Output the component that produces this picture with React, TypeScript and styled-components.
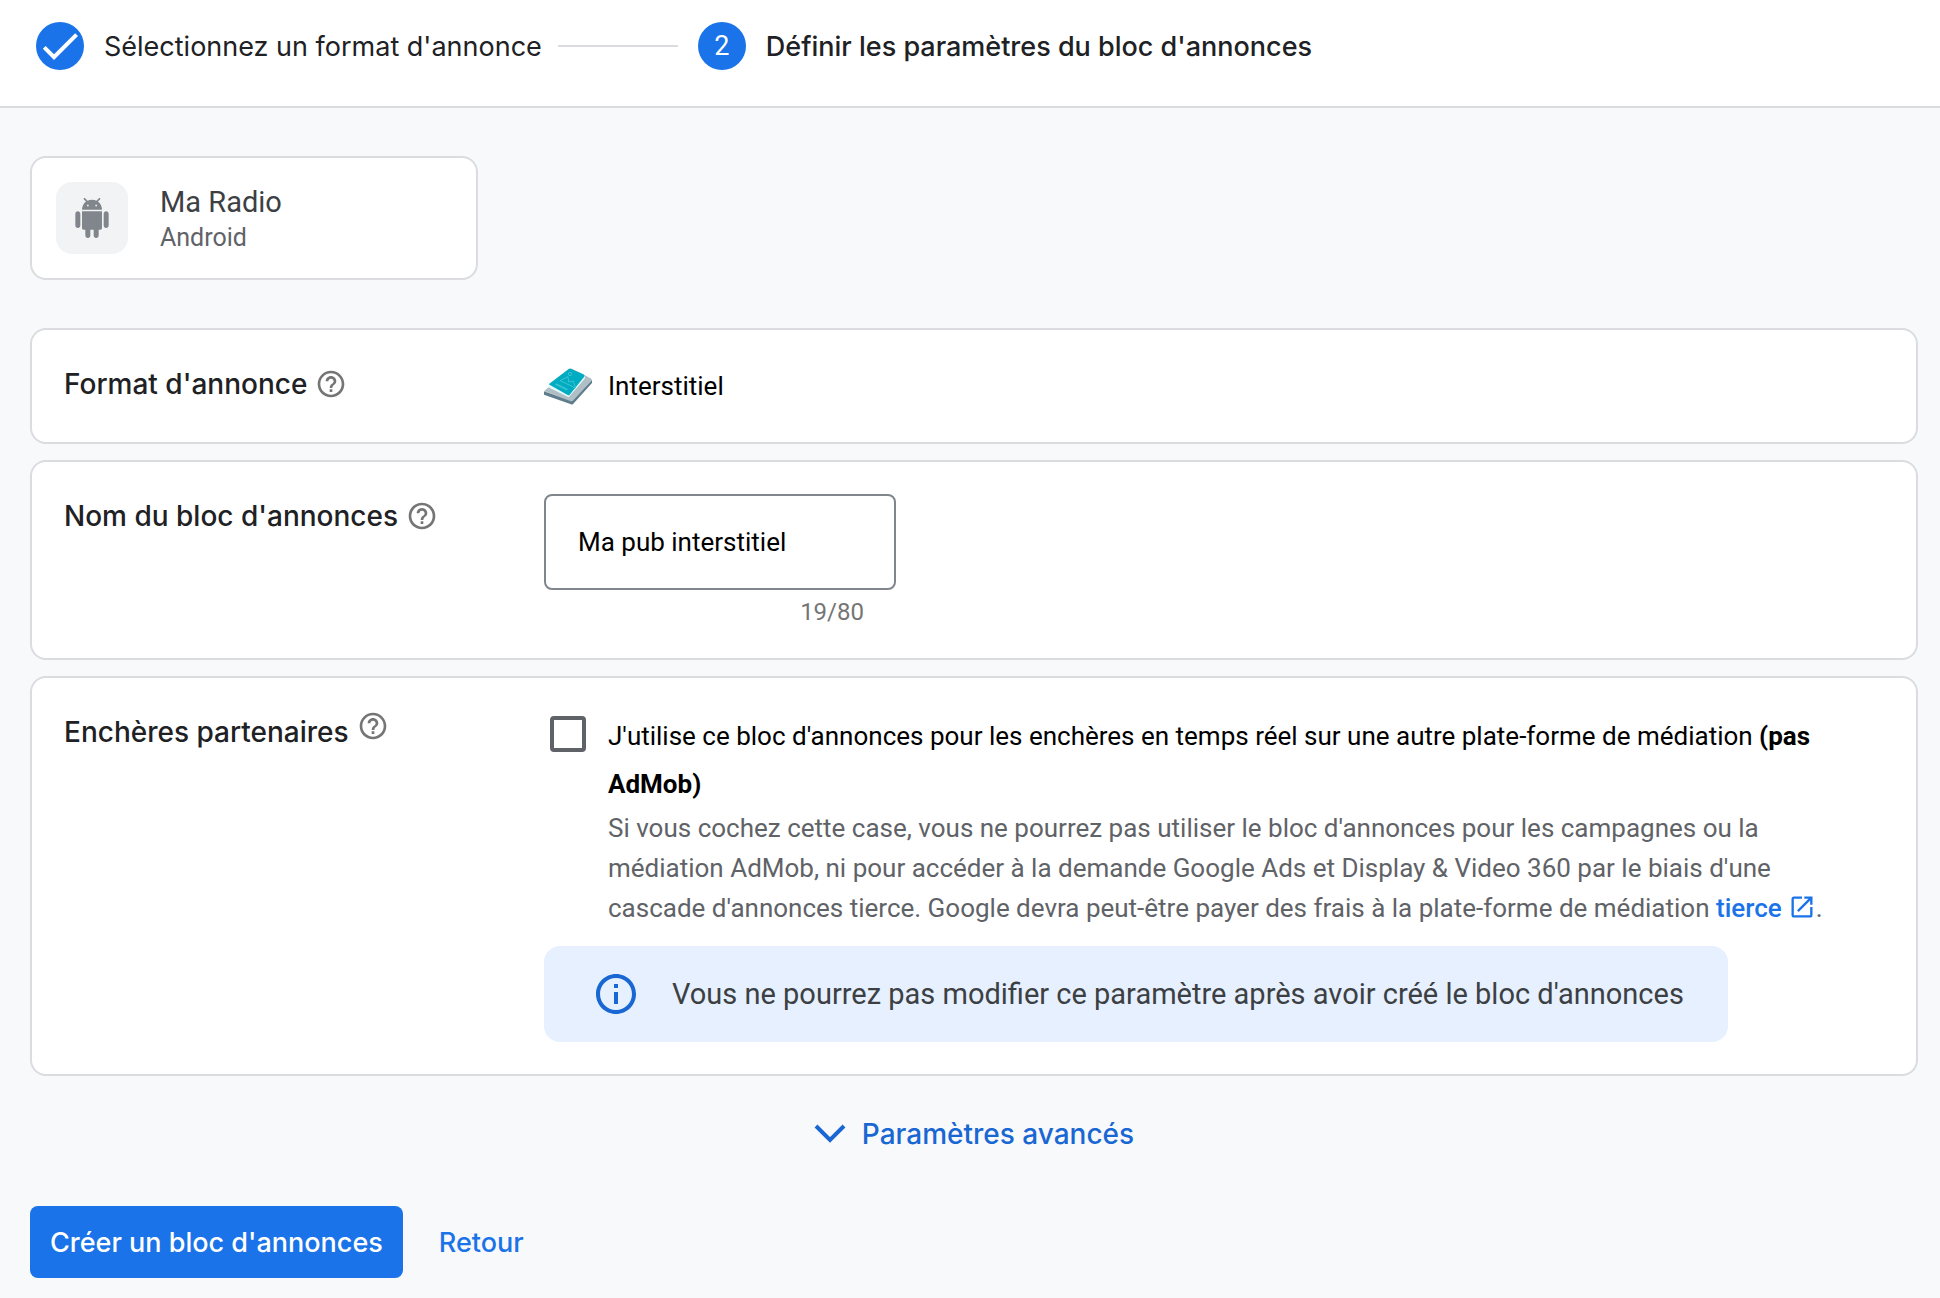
import React, { useId, useState } from "react";
import styled, { createGlobalStyle, css } from "styled-components";

const textFont = css`
  font-family: Roboto, "Liberation Sans", Arial, sans-serif;
`;

const titleFont = css`
  font-family: "Google Sans", "Product Sans", Inter, "Liberation Sans", sans-serif;
`;

const GlobalStyle = createGlobalStyle`
  *, *::before, *::after { box-sizing: border-box; }
  body {
    margin: 0;
    background: #f8f9fb;
    color: #000;
    font-family: Roboto, "Liberation Sans", Arial, sans-serif;
    font-size: 26px;
  }
`;

const Stepper = styled.header`
  background: #fff;
  border-bottom: 2px solid #dadce0;
`;

const StepList = styled.ol`
  display: flex;
  align-items: center;
  margin: 0;
  padding: 22px 36px 36px;
  list-style: none;
`;

const Step = styled.li`
  display: flex;
  align-items: center;
  gap: 20px;
`;

const StepBadge = styled.span`
  display: grid;
  place-items: center;
  width: 48px;
  height: 48px;
  border-radius: 50%;
  background: #1a73e8;
  color: #fff;
  font-size: 27px;
  line-height: 48px;
`;

const StepName = styled.span<{ $current?: boolean }>`
  ${titleFont}
  padding-top: 2px;
  font-size: 27px;
  line-height: 40px;
  font-weight: ${(p) => (p.$current ? 500 : 400)};
  color: #202124;
`;

const StepLine = styled.li`
  width: 120px;
  height: 2px;
  margin: 0 20px 0 16px;
  background: #dadce0;
`;

const Page = styled.main`
  padding: 48px 22px 20px 30px;
`;

const AppCard = styled.section`
  display: flex;
  align-items: center;
  gap: 32px;
  width: 448px;
  padding: 24px;
  border: 2px solid #dadce0;
  border-radius: 16px;
  background: #fff;
`;

const AppIcon = styled.div`
  display: grid;
  place-items: center;
  width: 72px;
  height: 72px;
  border-radius: 16px;
  background: #f1f3f4;
  color: #80868b;
`;

const AppName = styled.div`
  font-size: 29px;
  line-height: 40px;
  color: #3c4043;
`;

const AppPlatform = styled.div`
  font-size: 25px;
  line-height: 32px;
  color: #5f6368;
`;

const Settings = styled.form`
  display: flex;
  flex-direction: column;
  gap: 16px;
  margin-top: 48px;
`;

const Card = styled.section`
  display: grid;
  grid-template-columns: 480px minmax(0, 1fr);
  padding: 32px 64px 32px 32px;
  border: 2px solid #dadce0;
  border-radius: 16px;
  background: #fff;
`;

const CardTitle = styled.div<{ $raised?: boolean }>`
  display: flex;
  align-items: ${(p) => (p.$raised ? "flex-start" : "center")};
  align-self: start;
  gap: 8px;
`;

const titleText = css`
  ${titleFont}
  margin: 0;
  font-size: 28px;
  line-height: 44px;
  font-weight: 500;
  color: #202124;
`;

const CardHeading = styled.h2`
  ${titleText}
`;

const CardLabel = styled.label`
  ${titleText}
`;

const HelpButton = styled.button`
  display: block;
  flex: none;
  padding: 0;
  border: 0;
  background: none;
  color: #757575;
  cursor: pointer;

  svg {
    display: block;
  }
`;

const FormatValue = styled.div`
  display: flex;
  align-items: center;
  gap: 16px;
  line-height: 48px;
`;

const NameField = styled.div`
  width: 352px;
`;

const NameInput = styled.input`
  ${textFont}
  display: block;
  width: 100%;
  height: 96px;
  padding: 0 32px;
  border: 2px solid #80868b;
  border-radius: 8px;
  background: #fff;
  color: #000;
  font-size: 26px;
`;

const Counter = styled.div`
  margin-top: 8px;
  padding-right: 32px;
  text-align: right;
  font-size: 24px;
  line-height: 28px;
  color: #757575;
`;

const BiddingOption = styled.div`
  display: grid;
  grid-template-columns: 64px minmax(0, 1fr);
  padding: 2px 0;
`;

const Checkbox = styled.input`
  appearance: none;
  width: 36px;
  height: 36px;
  margin: 4px 6px;
  border: 4px solid #5f6368;
  border-radius: 4px;
  background: #fff;

  &:checked {
    border-color: #1a73e8;
    background: #1a73e8;
  }
`;

const OptionLabel = styled.label`
  display: block;
  line-height: 48px;
`;

const OptionNote = styled.p`
  margin: 0;
  line-height: 40px;
  color: #5f6368;
`;

const NoteLink = styled.a`
  color: #1a73e8;
  font-weight: 500;
  text-decoration: none;
  white-space: nowrap;

  svg {
    margin-left: 6px;
    vertical-align: -4px;
  }
`;

const Notice = styled.div`
  display: flex;
  align-items: center;
  gap: 32px;
  max-width: 1184px;
  margin-top: 16px;
  padding: 24px 32px 24px 48px;
  border-radius: 16px;
  background: #e6f0ff;
  color: #3c4043;
  font-size: 29px;
  line-height: 48px;

  svg {
    flex: none;
    color: #1967d2;
  }
`;

const AdvancedToggle = styled.button`
  ${titleFont}
  display: flex;
  align-items: center;
  align-self: center;
  gap: 16px;
  margin: 18px 0 32px;
  padding: 0;
  border: 0;
  background: none;
  color: #1967d2;
  font-size: 28px;
  line-height: 48px;
  font-weight: 500;
  cursor: pointer;
`;

const Actions = styled.div`
  display: flex;
  gap: 16px;
`;

const ActionButton = styled.button<{ $primary?: boolean }>`
  ${titleFont}
  height: 72px;
  padding: 0 20px;
  border: 0;
  border-radius: 8px;
  background: ${(p) => (p.$primary ? "#1a73e8" : "transparent")};
  color: ${(p) => (p.$primary ? "#fff" : "#1a73e8")};
  font-size: 27px;
  font-weight: 500;
  cursor: pointer;
`;

const Glyph = ({ size, d }: { size: number; d: string }) => (
  <svg width={size} height={size} viewBox="0 0 24 24" fill="currentColor" aria-hidden="true">
    <path d={d} />
  </svg>
);

const glyphs = {
  check: "M9 16.17L4.83 12l-1.42 1.41L9 19 21 7l-1.41-1.41z",
  android:
    "M6 18c0 .55.45 1 1 1h1v3.5c0 .83.67 1.5 1.5 1.5s1.5-.67 1.5-1.5V19h2v3.5c0 .83.67 1.5 1.5 1.5s1.5-.67 1.5-1.5V19h1c.55 0 1-.45 1-1V8H6v10zM3.5 8C2.67 8 2 8.67 2 9.5v7c0 .83.67 1.5 1.5 1.5S5 17.33 5 16.5v-7C5 8.67 4.33 8 3.5 8zm17 0c-.83 0-1.5.67-1.5 1.5v7c0 .83.67 1.5 1.5 1.5s1.5-.67 1.5-1.5v-7c0-.83-.67-1.5-1.5-1.5zm-4.97-5.84l1.3-1.3c.2-.2.2-.51 0-.71-.2-.2-.51-.2-.71 0l-1.48 1.48C13.85 1.23 12.95 1 12 1c-.96 0-1.86.23-2.66.63L7.85.15c-.2-.2-.51-.2-.71 0-.2.2-.2.51 0 .71l1.31 1.31C6.97 3.26 6 5.01 6 7h12c0-1.99-.97-3.75-2.47-4.84zM10 5H9V4h1v1zm5 0h-1V4h1v1z",
  help: "M11 18h2v-2h-2v2zm1-16C6.48 2 2 6.48 2 12s4.48 10 10 10 10-4.48 10-10S17.52 2 12 2zm0 18c-4.41 0-8-3.59-8-8s3.59-8 8-8 8 3.59 8 8-3.59 8-8 8zm0-14c-2.21 0-4 1.79-4 4h2c0-1.1.9-2 2-2s2 .9 2 2c0 2-3 1.75-3 5h2c0-2.25 3-2.5 3-5 0-2.21-1.79-4-4-4z",
  info: "M11 7h2v2h-2zm0 4h2v6h-2zm1-9C6.48 2 2 6.48 2 12s4.48 10 10 10 10-4.48 10-10S17.52 2 12 2zm0 18c-4.41 0-8-3.59-8-8s3.59-8 8-8 8 3.59 8 8-3.59 8-8 8z",
  open: "M19 19H5V5h7V3H5c-1.11 0-2 .9-2 2v14c0 1.1.89 2 2 2h14c1.1 0 2-.9 2-2v-7h-2v7zM14 3v2h3.59l-9.83 9.83 1.41 1.41L19 6.41V10h2V3h-7z",
};

const InterstitialIcon = () => (
  <svg width="48" height="37" viewBox="0 0 144 111" aria-hidden="true">
    <path d="M0 70v10l81 29q3 2 7-2l56-62V35L84 98z" fill="#5f7d8c" />
    <path d="M0 70L76 4q3-3 8-2l56 29q5 3 2 7L88 97q-4 4-9 2z" fill="#b0bec5" />
    <path d="M13 58L76 6l44 18q6 3 2 8L74 88z" fill="#e4fafb" />
    <path d="M14 49L74 3q3-2 6-1l38 17q6 3 2 8L77 80q-3 3-6 1z" fill="#00acc1" />
    <g fill="none" stroke="#3cc3d1" strokeWidth="3">
      <circle cx="78" cy="18" r="5" />
      <path d="M48 38l24-12 2 16 14-3 7 21z" />
      <path d="M35 48l35 17" strokeWidth="5" />
    </g>
  </svg>
);

const Help = ({ topic }: { topic: string }) => (
  <HelpButton type="button" aria-label={`Aide : ${topic}`}>
    <Glyph size={32} d={glyphs.help} />
  </HelpButton>
);

export default function App() {
  const nameId = useId();
  const bidId = useId();
  const [name, setName] = useState("Ma pub interstitiel");
  const [bidding, setBidding] = useState(false);

  return (
    <>
      <GlobalStyle />
      <Stepper>
        <StepList>
          <Step>
            <StepBadge>
              <Glyph size={48} d={glyphs.check} />
            </StepBadge>
            <StepName>Sélectionnez un format d'annonce</StepName>
          </Step>
          <StepLine aria-hidden="true" />
          <Step aria-current="step">
            <StepBadge>2</StepBadge>
            <StepName $current>Définir les paramètres du bloc d'annonces</StepName>
          </Step>
        </StepList>
      </Stepper>

      <Page>
        <AppCard>
          <AppIcon>
            <Glyph size={40} d={glyphs.android} />
          </AppIcon>
          <div>
            <AppName>Ma Radio</AppName>
            <AppPlatform>Android</AppPlatform>
          </div>
        </AppCard>

        <Settings onSubmit={(e) => e.preventDefault()}>
          <Card>
            <CardTitle>
              <CardHeading>Format d'annonce</CardHeading>
              <Help topic="Format d'annonce" />
            </CardTitle>
            <FormatValue>
              <InterstitialIcon />
              Interstitiel
            </FormatValue>
          </Card>

          <Card>
            <CardTitle>
              <CardLabel htmlFor={nameId}>Nom du bloc d'annonces</CardLabel>
              <Help topic="Nom du bloc d'annonces" />
            </CardTitle>
            <NameField>
              <NameInput
                id={nameId}
                type="text"
                maxLength={80}
                value={name}
                onChange={(e) => setName(e.target.value)}
              />
              <Counter>{name.length}/80</Counter>
            </NameField>
          </Card>

          <Card>
            <CardTitle $raised>
              <CardHeading>Enchères partenaires</CardHeading>
              <Help topic="Enchères partenaires" />
            </CardTitle>
            <div>
              <BiddingOption>
                <Checkbox
                  id={bidId}
                  type="checkbox"
                  checked={bidding}
                  onChange={(e) => setBidding(e.target.checked)}
                />
                <div>
                  <OptionLabel htmlFor={bidId}>
                    J'utilise ce bloc d'annonces pour les enchères en temps réel sur une autre
                    plate-forme de médiation <b>(pas AdMob)</b>
                  </OptionLabel>
                  <OptionNote>
                    Si vous cochez cette case, vous ne pourrez pas utiliser le bloc d'annonces pour
                    les campagnes ou la médiation AdMob, ni pour accéder à la demande Google Ads et
                    Display &amp; Video 360 par le biais d'une cascade d'annonces tierce. Google
                    devra peut-être payer des frais à la plate-forme de médiation{" "}
                    <NoteLink href="#tierce">
                      tierce
                      <Glyph size={28} d={glyphs.open} />
                    </NoteLink>
                    .
                  </OptionNote>
                </div>
              </BiddingOption>
              <Notice>
                <Glyph size={48} d={glyphs.info} />
                <span>Vous ne pourrez pas modifier ce paramètre après avoir créé le bloc d'annonces</span>
              </Notice>
            </div>
          </Card>

          <AdvancedToggle type="button" aria-expanded="false">
            <svg width="32" height="20" viewBox="0 0 32 20" fill="none" aria-hidden="true">
              <path d="M2 2l14 14L30 2" stroke="currentColor" strokeWidth="4" />
            </svg>
            Paramètres avancés
          </AdvancedToggle>

          <Actions>
            <ActionButton $primary type="submit">
              Créer un bloc d'annonces
            </ActionButton>
            <ActionButton type="button">Retour</ActionButton>
          </Actions>
        </Settings>
      </Page>
    </>
  );
}
